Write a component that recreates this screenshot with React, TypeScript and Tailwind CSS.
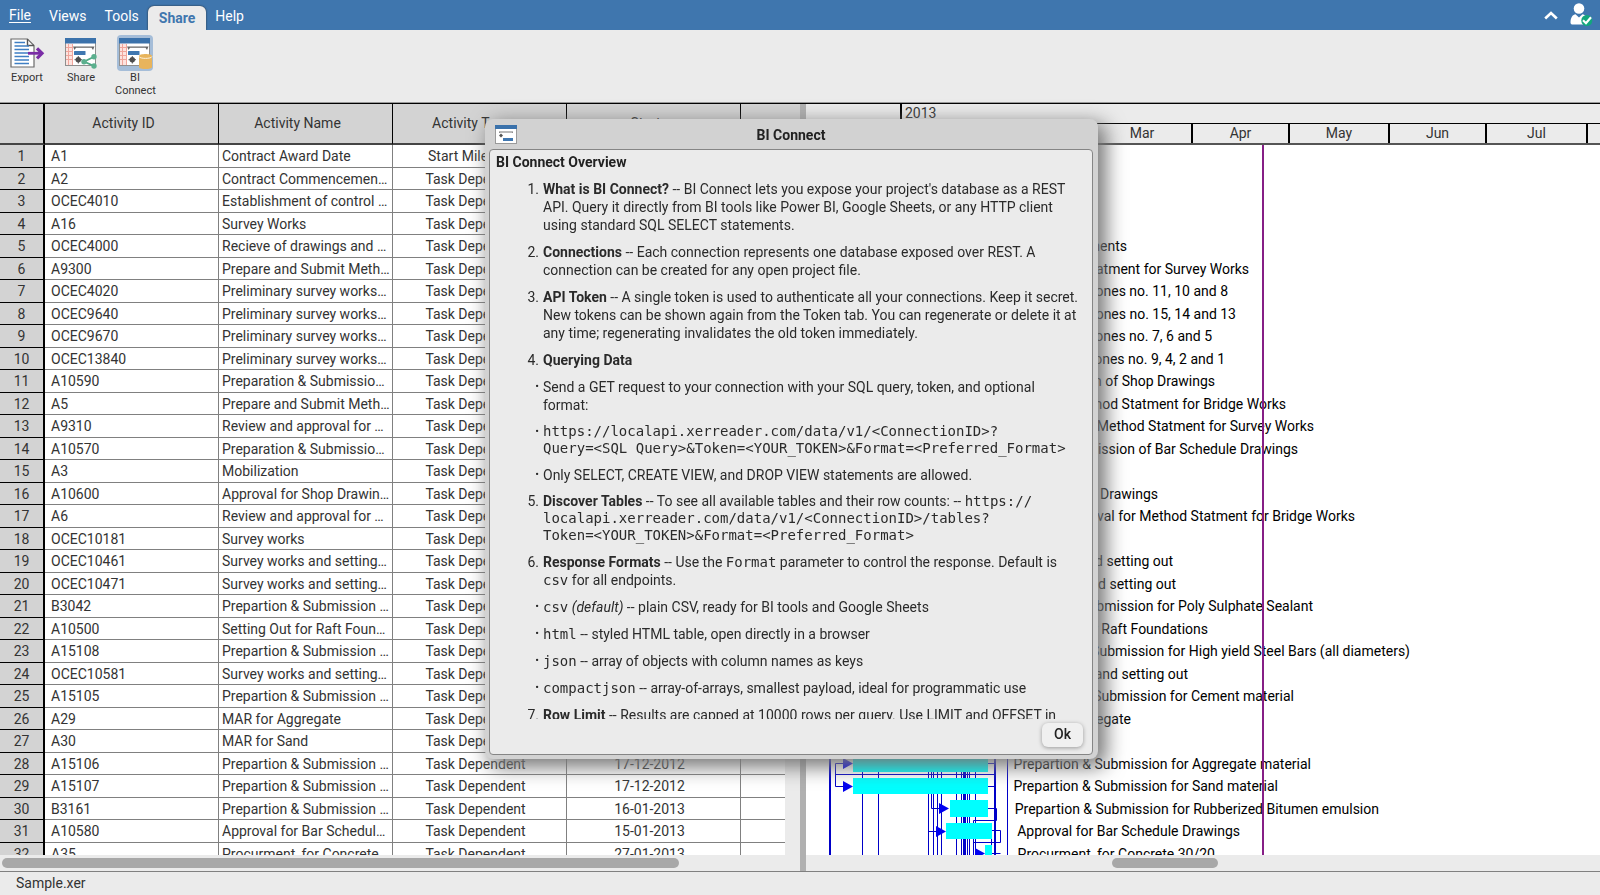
import React, { useState } from 'react';
import clsx from 'clsx';

interface Activity {
    id: string;
    name: string;
    type?: string;
    start?: string;
    // right edge of the label on the timeline
    labelEnd?: number;
}

const activities: Activity[] = [
    { id: 'A1', name: 'Contract Award Date', type: 'Start Milestone' },
    { id: 'A2', name: 'Contract Commencement Date' },
    { id: 'OCEC4010', name: 'Establishment of control points' },
    { id: 'A16', name: 'Survey Works' },
    { id: 'OCEC4000', name: 'Recieve of drawings and documents', labelEnd: 321 },
    { id: 'A9300', name: 'Prepare and Submit Method Statment for Survey Works', labelEnd: 443 },
    { id: 'OCEC4020', name: 'Preliminary survey works for Zones no. 11, 10 and 8', labelEnd: 422 },
    { id: 'OCEC9640', name: 'Preliminary survey works for Zones no. 15, 14 and 13', labelEnd: 430 },
    { id: 'OCEC9670', name: 'Preliminary survey works for Zones no. 7, 6 and 5', labelEnd: 406 },
    { id: 'OCEC13840', name: 'Preliminary survey works for Zones no. 9, 4, 2 and 1', labelEnd: 419 },
    { id: 'A10590', name: 'Preparation & Submission of Shop Drawings', labelEnd: 409 },
    { id: 'A5', name: 'Prepare and Submit Method Statment for Bridge Works', labelEnd: 480 },
    { id: 'A9310', name: 'Review and approval for Method Statment for Survey Works', labelEnd: 508 },
    { id: 'A10570', name: 'Preparation & Submission of Bar Schedule Drawings', labelEnd: 492 },
    { id: 'A3', name: 'Mobilization' },
    { id: 'A10600', name: 'Approval for Shop Drawings', labelEnd: 352 },
    { id: 'A6', name: 'Review and approval for Method Statment for Bridge Works', labelEnd: 549 },
    { id: 'OCEC10181', name: 'Survey works' },
    { id: 'OCEC10461', name: 'Survey works and setting out', labelEnd: 367 },
    { id: 'OCEC10471', name: 'Survey works and setting out', labelEnd: 370 },
    { id: 'B3042', name: 'Prepartion & Submission for Poly Sulphate Sealant', labelEnd: 507 },
    { id: 'A10500', name: 'Setting Out for Raft Foundations', labelEnd: 402 },
    { id: 'A15108', name: 'Prepartion & Submission for High yield Steel Bars (all diameters)', labelEnd: 604 },
    { id: 'OCEC10581', name: 'Survey works and setting out', labelEnd: 382 },
    { id: 'A15105', name: 'Prepartion & Submission for Cement material', labelEnd: 488 },
    { id: 'A29', name: 'MAR for Aggregate', labelEnd: 325 },
    { id: 'A30', name: 'MAR for Sand' },
    { id: 'A15106', name: 'Prepartion & Submission for Aggregate material', start: '17-12-2012', labelEnd: 505 },
    { id: 'A15107', name: 'Prepartion & Submission for Sand material', start: '17-12-2012', labelEnd: 472 },
    { id: 'B3161', name: 'Prepartion & Submission for Rubberized Bitumen emulsion', start: '16-01-2013', labelEnd: 573 },
    { id: 'A10580', name: 'Approval for Bar Schedule Drawings', start: '15-01-2013', labelEnd: 434 },
    { id: 'A35', name: 'Procurment, for Concrete 30/20', start: '27-01-2013', labelEnd: 409 },
];

const months = [
    { name: '', width: 94 },
    { name: 'Jan', width: 100 },
    { name: 'Feb', width: 91 },
    { name: 'Mar', width: 100 },
    { name: 'Apr', width: 97 },
    { name: 'May', width: 100 },
    { name: 'Jun', width: 97 },
    { name: 'Jul', width: 101 },
    { name: 'Aug', width: 100 },
];

const rowHeight = (i: number) => (i % 2 === 0 ? 'h-[23px]' : 'h-[22px]');

function ExportIcon() {
    return (
        <svg viewBox="0 0 36 36" className="size-9" fill="none">
            <path d="M2 4H18.5L25 10.5V32H2Z" fill="#fff" stroke="#6b6b6b" strokeWidth="1.2" />
            <path d="M18.5 4V10.5H25" stroke="#555" strokeWidth="1.4" />
            <path d="M5.5 7.5H16M5.5 11H20M5.5 14.5H20M5.5 18H20M5.5 21.5H20M5.5 25H20M5.5 28.5H20" stroke="#3f7fc4" strokeWidth="1.5" />
            <path d="M19 18.3H33" stroke="#7a2da6" strokeWidth="2.8" />
            <path d="M28 13.3L33 18.3L28 23.3" stroke="#7a2da6" strokeWidth="3.2" />
        </svg>
    );
}

function ScheduleGlyph() {
    return (
        <>
            <rect x="2.5" y="3.5" width="30" height="27" fill="#fff" stroke="#8f8f8f" />
            <path d="M3 8.5H9V30H3Z" fill="#fde3df" />
            <path d="M3 12.5H9M3 16.5H9M3 20.5H9M3 24.5H9M5.5 9V30M9.5 9V30" stroke="#f0a59b" />
            <path d="M2.5 30.5V9" stroke="#8f8f8f" />
            <rect x="2" y="3" width="31" height="5.5" fill="#3b72ab" />
            <path d="M10 11.5H31.5L30 15L28.5 12.8H13L11.5 15Z" fill="#666" />
            <rect x="11" y="16" width="11.5" height="4" rx="0.5" fill="#3f77b0" />
            <path d="M15.3 21V28.5M11.5 24.7H19" stroke="#555" />
            <circle cx="15.3" cy="24.7" r="2.7" fill="#4d4d4d" />
        </>
    );
}

function ShareIcon() {
    return (
        <svg viewBox="0 0 36 36" className="size-9" fill="none">
            <ScheduleGlyph />
            <path d="M31 21.7L21 26.7L31 31" stroke="#4fa985" strokeWidth="1.8" />
            <g fill="#5bb08e">
                <circle cx="31" cy="21.7" r="2.7" />
                <circle cx="21" cy="26.7" r="2.7" />
                <circle cx="31" cy="31" r="2.7" />
            </g>
        </svg>
    );
}

function BiConnectIcon() {
    return (
        <svg viewBox="0 0 36 36" className="size-9" fill="none">
            <ScheduleGlyph />
            <path d="M22 21C22 18.2 35 18.2 35 21V32C35 34.8 22 34.8 22 32Z" fill="#e8b45c" />
            <path d="M22 21.5C22.5 24 34.5 24 35 21.5" stroke="#fdf1dc" />
        </svg>
    );
}

function DialogIcon() {
    return (
        <svg viewBox="0 0 22 19" className="h-[19px] w-[22px]" fill="none">
            <rect x="0.5" y="0.5" width="21" height="18" fill="#fff" stroke="#9a9a9a" />
            <rect width="22" height="4" fill="#3b72ab" />
            <path d="M4 6.5H18V8L16.5 7.5H5.5L4 8Z" fill="#777" />
            <path d="M6 8.5L8 10.5L6 12.5L4 10.5Z" fill="#555" />
            <rect x="8" y="13" width="10" height="3" fill="#3f77b0" />
        </svg>
    );
}

function UserIcon() {
    return (
        <svg viewBox="0 0 24 24" className="size-6" fill="none">
            <circle cx="10" cy="6.5" r="5.3" fill="#fff" />
            <path d="M1.5 20.5C1.5 15.5 4 12.5 6.5 12.3L10 15.5L13.5 12.3C16 12.5 18.5 15.5 18.5 20.5C18.5 22 17.5 22.5 16.5 22.5H3.5C2.5 22.5 1.5 22 1.5 20.5Z" fill="#fff" />
            <circle cx="17.8" cy="18.5" r="5.5" fill="#12a67c" />
            <path d="M14 18.2L17 21.2L22 15.2" stroke="#fff" strokeWidth="2.2" />
        </svg>
    );
}

const tools = [
    { label: 'Export', icon: ExportIcon },
    { label: 'Share', icon: ShareIcon },
    { label: 'BI Connect', icon: BiConnectIcon, active: true },
];

function MenuBar() {
    return (
        <header className="flex h-[30px] shrink-0 items-end bg-[#3f76ae] text-white">
            <nav className="flex h-full flex-1 items-end">
                <button className="flex h-full items-center px-[9px] underline underline-offset-2">File</button>
                <button className="flex h-full items-center px-[9px] pt-0.5">Views</button>
                <button className="flex h-full items-center px-[9px] pt-0.5">Tools</button>
                <button className="h-6 rounded-t-md bg-[#ebebeb] px-[11px] font-bold text-[#3f76ae] shadow-[0_0_2px_#222]">Share</button>
                <button className="flex h-full items-center px-[9px] pt-0.5">Help</button>
            </nav>
            <button aria-label="Collapse ribbon" className="flex h-full w-7 items-center justify-center">
                <svg viewBox="0 0 14 9" className="h-[9px] w-[14px]" fill="none">
                    <path d="M1.2 7.5L7 2L12.8 7.5" stroke="#fff" strokeWidth="2.6" />
                </svg>
            </button>
            <button aria-label="Account" className="flex h-full items-center pr-[7px] pb-0.5 pl-1">
                <UserIcon />
            </button>
        </header>
    );
}

function Ribbon() {
    return (
        <div className="relative z-10 flex h-[73px] shrink-0 border-b border-[#999] bg-[#ebebeb] pt-[5px]">
            {tools.map(({ label, icon: Icon, active }) => (
                <button key={label} className="flex w-[54px] flex-col items-center text-[11px] leading-[13px] text-[#333]">
                    <span className={clsx('rounded-sm', active && 'bg-[#a5bdd8]')}>
                        <Icon />
                    </span>
                    <span className="w-10 text-center">{label}</span>
                </button>
            ))}
        </div>
    );
}

function ActivityTable() {
    const head = 'h-[41px] border-r border-b-2 border-r-black border-b-[#444] bg-[#d3d3d3] pr-4 font-normal';
    const cell = 'truncate border-r border-b border-[#808080] bg-white';

    return (
        <section className="flex w-1/2 flex-col bg-[#ebebeb]">
            <div className="flex min-h-0 flex-1">
                <div className="min-w-0 flex-1 overflow-hidden">
                    <table className="w-[915px] table-fixed border-separate border-spacing-0 text-[#333]">
                        <colgroup>
                            <col className="w-[45px]" />
                            <col className="w-[174px]" />
                            <col className="w-[174px]" />
                            <col className="w-[174px]" />
                            <col className="w-[174px]" />
                            <col className="w-[174px]" />
                        </colgroup>
                        <thead>
                            <tr>
                                <th className="h-[41px] border-r-2 border-b-2 border-r-black border-b-[#444] bg-[#d3d3d3]" />
                                <th className={head}>Activity ID</th>
                                <th className={head}>Activity Name</th>
                                <th className={head}>Activity Type</th>
                                <th className={head}>Start</th>
                                <th className={head} />
                            </tr>
                        </thead>
                        <tbody>
                            {activities.map((a, i) => (
                                <tr key={a.id} className="leading-5">
                                    <th className={clsx(rowHeight(i), 'border-r-2 border-b border-black bg-[#d3d3d3] font-normal')}>{i + 1}</th>
                                    <td className={clsx(cell, 'pl-[6px]')}>{a.id}</td>
                                    <td className={clsx(cell, 'pr-0.5 pl-[3px]')}>{a.name}</td>
                                    <td className={clsx(cell, 'pr-2 text-center')}>{a.type ?? 'Task Dependent'}</td>
                                    <td className={clsx(cell, 'pr-2 text-center')}>{a.start}</td>
                                    <td className={cell} />
                                </tr>
                            ))}
                        </tbody>
                    </table>
                </div>
                <div className="w-[15px]">
                    <div className="h-[41px] bg-[#d3d3d3]" />
                </div>
            </div>
            <div className="h-4 px-0.5 py-[3px]">
                <div className="h-[10px] w-[85%] rounded-full bg-[#a8a8a8]" />
            </div>
        </section>
    );
}

function GanttLinks() {
    return (
        <svg className="absolute top-0 left-0 h-[711px] w-[420px]" fill="none">
            <g stroke="#0000c8">
                <path d="M24 600V711M189 600V711" strokeWidth="2" />
                <path d="M29.5 618.5V641.5H37M29.5 618.5H37M29.5 629.5H189" />
                <path d="M56.5 617V711M72.5 617V711M201.5 600V711" />
                <path d="M122.5 627V711M127.5 627V711M131.5 627V711M135.5 627V711M125.5 627V663.5H134" />
                <path d="M150.5 627V711M155.5 627V711M157.5 627V711M158.5 627V711M159.5 627V711M161.5 627V711M163.5 627V711M169.5 627V711" />
                <path d="M122.5 686.5H131M182 618.5H189M182 641.5H189" />
                <path d="M182 663.5H190.5V675.5H167.5V711M186 685.5H194.5V697.5H167.5M185.5 678V711M186 708.5H194.5" />
            </g>
            <g fill="#00ffff">
                <rect x="47" y="611" width="135" height="16" />
                <rect x="47" y="633" width="135" height="16" />
                <rect x="144" y="655" width="38" height="17" />
                <rect x="140" y="678" width="46" height="16" />
                <rect x="179" y="700" width="7" height="16" />
            </g>
            <path
                d="M37 613L47 618.5L37 624ZM37 636L47 641.5L37 647ZM133 658L143 663.5L133 669ZM130 681L140 686.5L130 692ZM169 703L179 708.5L169 714Z"
                fill="#0000f0"
            />
        </svg>
    );
}

function Gantt() {
    return (
        <section className="flex min-w-0 flex-1 flex-col bg-[#ebebeb]">
            <div className="shrink-0 overflow-hidden border-b-2 border-[#555] text-[#333]">
                <div className="flex h-5 border-b border-black leading-[18px]">
                    <div className="w-[94px] shrink-0" />
                    <div className="flex-1 border-l-2 border-black pl-[3px]">2013</div>
                </div>
                <div className="flex h-[19px] leading-[19px]">
                    {months.map((m, i) => (
                        <div
                            key={m.name}
                            className={clsx('shrink-0 text-center', i > 0 && 'border-l-2 border-black')}
                            style={{ width: m.width }}
                        >
                            {m.name}
                        </div>
                    ))}
                </div>
            </div>
            <div className="relative min-h-0 flex-1 overflow-hidden bg-white text-black">
                {activities.map((a, i) => (
                    <div
                        key={a.id}
                        className={clsx(rowHeight(i), 'flex justify-end leading-[22px] whitespace-nowrap')}
                        style={{ width: a.labelEnd ?? 0 }}
                    >
                        {a.labelEnd && a.name}
                    </div>
                ))}
                <GanttLinks />
                <div className="absolute inset-y-0 left-[456px] w-0.5 bg-[#861f86]" />
            </div>
            <div className="h-4 py-[3px] pl-[306px]">
                <div className="h-[10px] w-[106px] rounded-full bg-[#a8a8a8]" />
            </div>
        </section>
    );
}

function Item({ marker, children, tight }: { marker: string; children: React.ReactNode; tight?: boolean }) {
    return (
        <li className={clsx('flex', tight ? 'leading-[17px]' : 'leading-[18px]')}>
            <span className={clsx('w-[47px] shrink-0 pr-1 text-right', marker === '•' && 'text-[11px]')}>{marker}</span>
            <div className="min-w-0 flex-1">{children}</div>
        </li>
    );
}

function Code({ children }: { children: React.ReactNode }) {
    return <code className="font-['DejaVu_Sans_Mono',monospace] text-[14px] leading-none">{children}</code>;
}

function BiConnectDialog({ onClose }: { onClose: () => void }) {
    return (
        <div className="fixed inset-0 z-20 flex items-center justify-center pr-[17px] pb-[17px]">
            <div
                role="dialog"
                aria-labelledby="bi-title"
                className="flex h-[640px] w-[613px] flex-col rounded-lg bg-[#d2d2d2] pr-[5px] pb-1 pl-1 text-[#2a2a2a] shadow-[6px_6px_20px_2px_#757575]"
            >
                <div className="grid h-[30px] shrink-0 grid-cols-[1fr_auto_1fr] items-center px-[6px]">
                    <DialogIcon />
                    <h2 id="bi-title" className="pt-0.5 font-bold text-[#222]">BI Connect</h2>
                </div>
                <div className="flex min-h-0 flex-1 flex-col rounded-[4px] border border-[#858585] bg-[#ebebeb] pl-[6px]">
                    <div className="min-h-0 flex-1 overflow-hidden pt-[3px] pr-[11px]">
                        <h3 className="leading-[18px] font-bold text-[#222]">BI Connect Overview</h3>
                        <ol className="mt-[9px] flex flex-col gap-[9px]">
                            <Item marker="1.">
                                <b>What is BI Connect?</b> -- BI Connect lets you expose your project's database as a REST API. Query it
                                directly from BI tools like Power BI, Google Sheets, or any HTTP client using standard SQL SELECT
                                statements.
                            </Item>
                            <Item marker="2.">
                                <b>Connections</b> -- Each connection represents one database exposed over REST. A connection can be
                                created for any open project file.
                            </Item>
                            <Item marker="3.">
                                <b>API Token</b> -- A single token is used to authenticate all your connections. Keep it secret. New tokens
                                can be shown again from the Token tab. You can regenerate or delete it at any time; regenerating
                                invalidates the old token immediately.
                            </Item>
                            <Item marker="4.">
                                <b>Querying Data</b>
                            </Item>
                            <Item marker="•">Send a GET request to your connection with your SQL query, token, and optional format:</Item>
                            <Item marker="•" tight>
                                <Code>
                                    {'https://localapi.xerreader.com/data/v1/<ConnectionID>?'}
                                    <br />
                                    {'Query=<SQL Query>&Token=<YOUR_TOKEN>&Format=<Preferred_Format>'}
                                </Code>
                            </Item>
                            <Item marker="•">Only SELECT, CREATE VIEW, and DROP VIEW statements are allowed.</Item>
                            <Item marker="5." tight>
                                <b>Discover Tables</b> -- To see all available tables and their row counts: --{' '}
                                <Code>
                                    https://
                                    <wbr />
                                    {'localapi.xerreader.com/data/v1/<ConnectionID>/tables?'}
                                    <br />
                                    {'Token=<YOUR_TOKEN>&Format=<Preferred_Format>'}
                                </Code>
                            </Item>
                            <Item marker="6.">
                                <b>Response Formats</b> -- Use the <Code>Format</Code> parameter to control the response. Default is{' '}
                                <Code>csv</Code> for all endpoints.
                            </Item>
                            <Item marker="•">
                                <Code>csv</Code> <i>(default)</i> -- plain CSV, ready for BI tools and Google Sheets
                            </Item>
                            <Item marker="•">
                                <Code>html</Code> -- styled HTML table, open directly in a browser
                            </Item>
                            <Item marker="•">
                                <Code>json</Code> -- array of objects with column names as keys
                            </Item>
                            <Item marker="•">
                                <Code>compactjson</Code> -- array-of-arrays, smallest payload, ideal for programmatic use
                            </Item>
                            <Item marker="7.">
                                <b>Row Limit</b> -- Results are capped at 10000 rows per query. Use LIMIT and OFFSET in
                            </Item>
                        </ol>
                    </div>
                    <div className="flex shrink-0 justify-end px-[9px] pt-1 pb-[7px]">
                        <button
                            onClick={onClose}
                            className="h-6 w-[41px] rounded-md bg-[#f0f0f0] pb-0.5 font-medium text-[#222] shadow-[0_1px_4px_rgba(0,0,0,0.35)]"
                        >
                            Ok
                        </button>
                    </div>
                </div>
            </div>
        </div>
    );
}

export default function App() {
    const [dialogOpen, setDialogOpen] = useState(true);

    return (
        <div className="flex h-screen flex-col overflow-hidden bg-[#ebebeb] font-[Roboto,sans-serif] text-[14px]">
            <MenuBar />
            <Ribbon />
            <main className="flex min-h-0 flex-1 border-t border-black">
                <ActivityTable />
                <div className="w-[6px] shrink-0 cursor-col-resize bg-[#b0b0b0]" />
                <Gantt />
            </main>
            <footer className="flex h-6 shrink-0 items-center border-t border-[#808080] bg-[#ebebeb] px-4 text-[#333]">Sample.xer</footer>
            {dialogOpen && <BiConnectDialog onClose={() => setDialogOpen(false)} />}
        </div>
    );
}
